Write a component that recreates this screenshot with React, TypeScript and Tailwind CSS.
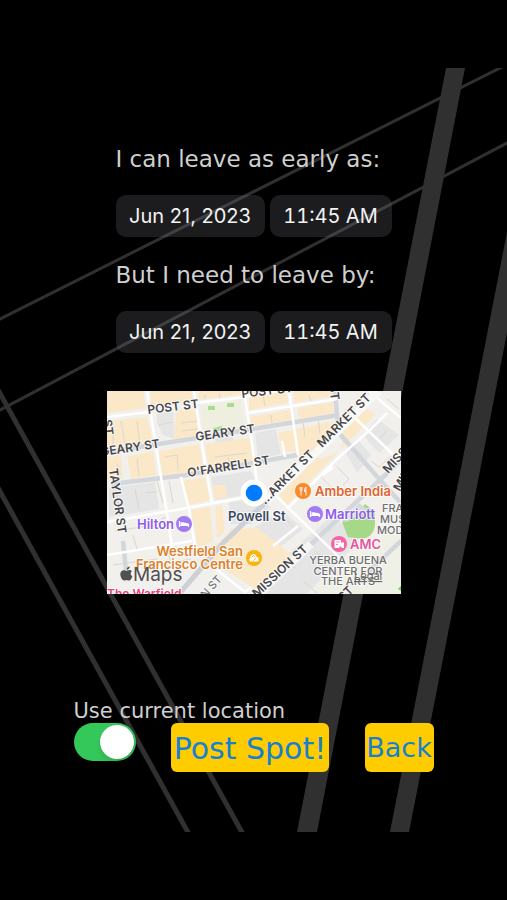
import React, { useState } from 'react';

const streets = [
  { text: 'POST ST', x: 41, y: 23, angle: -7 },
  { text: 'POST ST', x: 135, y: 7, angle: -7 },
  { text: 'GEARY ST', x: -6, y: 65, angle: -8 },
  { text: 'GEARY ST', x: 89, y: 50, angle: -8 },
  { text: "O'FARRELL ST", x: 81, y: 86, angle: -9 },
  { text: 'MARKET ST', x: 215, y: 57, angle: -45 },
  { text: '...ARKET ST', x: 158, y: 114, angle: -45 },
  { text: 'MISSION ST', x: 150, y: 207, angle: -43 },
  { text: 'MISSION ST', x: 281, y: 83, angle: -47 },
  { text: 'MINNA ST', x: 293, y: 101, angle: -60 },
  { text: 'TAYLOR ST', x: 2, y: 78, angle: 82 },
  { text: 'ST', x: -4, y: 29, angle: 82 },
  { text: 'ST', x: 222, y: -6, angle: 82 },
  { text: 'ST', x: 236, y: 211, angle: -45 },
];

const whiteRoads = [
  'M0 26 42 21M88 12 138 6 190-3',
  'M40 0 51 68 58 110 65 156',
  'M87 0 96 60 105 112',
  'M137 0 144 45 150 92',
  'M182 0 191 64',
  'M141 22 230 8',
  'M175 50 178 66',
  'M0 131 80 117 140 106',
  'M74 86 82 118 88 156',
  'M0 164 85 150',
  'M166 102 226 160 240 176',
  'M180 118 230 68 263 39 280 22',
  'M262 0 294 27',
  'M246 25 294 71',
  'M216 84 226 76M166 155 191 135M150 200 178 180',
  'M106 176 138 201 144 196',
];

const grayRoads = [
  'M0 61 90 47 232 24',
  'M4 93 80 84 190 64',
  'M228 0 230 24 232 42 273 89 294 112',
  'M16 150 20 190',
  'M186 170 273 89 294 69',
  'M262 180 294 150',
];

const beige = [
  'M0 0H36L39 17 0 22Z',
  'M44 0H84L86 10 43 16Z',
  'M92 0H134L136 3 91 9Z',
  'M142 0H179L181 12 142 19Z',
  'M187 0H226L226 5 187 12Z',
  'M0 30 40 26 46 52 0 57Z',
  'M69 20 88 18 92 44 67 48Z',
  'M142 26 183 19 186 29 145 35Z',
  'M190 17 226 11 227 22 192 28Z',
  'M0 66 14 64 16 88 0 88Z',
  'M20 66 46 60 49 84 24 88Z',
  'M52 60 92 53 97 80 55 84Z',
  'M98 53 142 47 147 74 102 80Z',
  'M171 42 227 30 228 38 206 62 193 64 187 60 175 61Z',
  'M236 38 258 16 268 24 234 58Z',
  'M76 90 98 86 103 109 81 114Z',
  'M106 94 118 94 120 106 107 108Z',
  'M84 119 103 116 106 150 91 156Z',
  'M108 115 115 114 118 140 110 148Z',
  'M170 101 208 64 214 68 232 60 180 114Z',
  'M92 158 112 152 124 138 151 137 187 166 148 198 120 180Z',
];

const grayBlocks = [
  'M50 22 66 20 68 48 56 44 50 32Z',
  'M10 6 30 2 32 13 12 12Z',
  'M108 48 126 46 128 58 110 60Z',
  'M148 42 169 38 174 63 151 68Z',
  'M104 86 144 80 149 90 132 105 108 109Z',
  'M2 97 48 91 52 118 2 126Z',
  'M122 111 150 108 164 116 144 133 124 133Z',
  'M178 166 226 124 252 150 200 203 160 203Z',
  'M176 120 196 138 168 160 148 136Z',
  'M238 60 250 48 264 64 250 82Z',
  'M270 28 292 44 272 62 256 44Z',
];

const outlines = [
  'M6 34V54M14 30 18 53M30 30 33 54M52 34 66 31M74 32 90 30M75 40 90 38',
  'M10 72 13 84M30 68 32 85M58 66 70 64 71 78M108 66 140 62M121 66 124 77',
  'M10 103 12 120M28 98 32 118M39 102 50 101M8 140 48 134M26 144 30 158M54 128 60 126',
  'M50 90 56 112M62 90 66 112M6 174 50 168M60 158 64 172 84 168',
  'M98 4V8M112 2 113 8M156 4 158 15M164 24 165 32M202 4 204 10M196 30 198 46M211 27 213 43',
  'M212 84 224 96M230 76 242 88 236 94M246 60 258 72M264 70 272 76 284 65M270 50 280 40M280 8 292 18',
  'M150 120 160 130M174 124 186 135M176 168 190 178M208 160 220 172M196 190 210 202M220 180 226 190',
];

const pois = [
  { name: 'Amber India', x: 208, y: 105, color: '#e4642b' },
  { name: 'Marriott', x: 218, y: 128, color: '#8f5bea' },
  { name: 'AMC', x: 243, y: 158, color: '#e8559a' },
  { name: 'Hilton', x: 30, y: 138, color: '#8f5bea' },
];

const Bed = ({ x, y }: { x: number; y: number }) => (
  <g transform={`translate(${x} ${y})`}>
    <circle r="8" fill="#a27bf2" />
    <path d="M-4.500-3V3M-4.500 1.500H4.500M4.500 3V0" stroke="#fff" strokeWidth="1.2" fill="none" />
    <path d="M-3.500-1.800h2.400L4.500-.6V1.500h-8z" fill="#fff" />
  </g>
);

const LocationMap = () => (
  <svg viewBox="0 0 294 203" role="img" aria-label="Map of Powell St" className="block w-full overflow-hidden bg-[#f1f0ed]">
    {grayBlocks.map((d) => <path key={d} d={d} fill="#e5e5e6" />)}
    {beige.map((d) => <path key={d} d={d} fill="#fbe8c9" />)}
    <path d="M93 15 134 9 139 41 97 47Z" fill="#efefe0" />
    <path d="M101 15h7v4h-7zM120 12h7v4h-7zM106 37l9-2v4l-9 2z" fill="#a9dc8c" />
    <path d="M205 203 294 125V203Z" fill="#eff0e6" />
    {outlines.map((d) => <path key={d} d={d} fill="none" stroke="#ddd7cb" strokeWidth="1" />)}
    {grayRoads.map((d) => <path key={d} d={d} fill="none" stroke="#d3d6da" strokeWidth="4.5" />)}
    {whiteRoads.map((d) => <path key={d} d={d} fill="none" stroke="#fff" strokeWidth="2.5" />)}
    <path d="M72 203 116 152 160 110" fill="none" stroke="#cdd1d5" strokeWidth="5" />
    <path d="M160 110 272 0" fill="none" stroke="#f8f8f7" strokeWidth="8" />
    <path d="M142 212 204 153" fill="none" stroke="#f5f5f4" strokeWidth="8" />
    <path d="M235 131 250 122 258 113 268 121V132C268 140 264 146 256 148L241 146Z" fill="#a5d987" />
    <path d="M235 130 252 112 260 118 240 131Z" fill="#d7dadb" />
    <path d="M291 198 294 195V200Z" fill="#70d050" />

    <g fill="#48484a" stroke="#fff" strokeWidth="2" strokeOpacity=".65" paintOrder="stroke" className="font-['Inter',sans-serif] text-[12px] font-semibold">
      {streets.map((s, i) => (
        <text key={i} transform={`translate(${s.x} ${s.y}) rotate(${s.angle})`}>{s.text}</text>
      ))}
      <text transform="translate(83 225) rotate(-48)" fill="#77777a" className="text-[11px] font-medium">ASON ST</text>
    </g>

    <g fill="#6f6f70" stroke="#fff" strokeWidth="2" strokeOpacity=".6" paintOrder="stroke" className="font-['Inter',sans-serif] text-[11px] font-medium">
      <text x="275" y="121">FRANCISCO</text>
      <text x="273" y="132">MUSEUM</text>
      <text x="270" y="143">MODERN</text>
      <g textAnchor="middle">
        <text x="241" y="173">YERBA BUENA</text>
        <text x="241" y="184">CENTER FOR</text>
        <text x="241" y="194">THE ARTS</text>
      </g>
    </g>

    <g stroke="#fff" strokeWidth="2" strokeOpacity=".75" paintOrder="stroke" className="font-['Inter',sans-serif] text-[13px] font-semibold">
      {pois.map((p) => (
        <text key={p.name} x={p.x} y={p.y} fill={p.color}>{p.name}</text>
      ))}
      <text x="121" y="130" fill="#3d4962">Powell St</text>
      <g fill="#dc822b" textAnchor="end">
        <text x="136" y="165">Westfield San</text>
        <text x="136" y="178">Francisco Centre</text>
      </g>
      <text x="0" y="207" fill="#ea3f78" className="text-[12px]">The Warfield</text>
    </g>

    <Bed x={77} y={133} />
    <Bed x={208} y={123} />
    <circle cx="196" cy="100" r="8" fill="#f68a2c" />
    <path d="M193 96v2.500q0 1 1 1v5M195 96v2.500q0 1-1 1M194 96v4M199 104.500V96q-1.500 1-1.500 4.500H199" stroke="#fff" strokeWidth=".9" fill="none" />
    <circle cx="232" cy="153" r="8" fill="#f763a4" />
    <path d="M227.500 149h6.500v2.500h3v5.500h-2l-1-1.500h-1.500v1.500h-5z" fill="#fff" />
    <path d="M229 151h3.500M229 153.500h2" stroke="#f763a4" strokeWidth=".8" />
    <circle cx="147" cy="167" r="8" fill="#f8b50f" />
    <path d="M142.500 170.500v-3.500h1v-2q3-4 6 0v1.500h2v4z" fill="#fff" />
    <path d="M145 166q1.500-3 3 0M146 170l3-3" stroke="#f8b50f" strokeWidth=".9" fill="none" />

    <g fill="#505052">
      <path d="M22.700 175.500c.2 1.700-1.400 3.300-3 3.300-.2-1.600 1.400-3.200 3-3.300zM24.800 180.400c-1.700 1.200-1.500 3.800.6 4.800-.7 2-2 4.300-3.400 4.300-1 0-1.300-.6-2.500-.6s-1.500.6-2.500.6c-1.800 0-3.700-3.600-3.700-6.200 0-2.700 1.700-4.100 3.500-4.100 1.100 0 2 .7 2.700.7.700 0 1.700-.8 3-.8 1 0 1.800.5 2.300 1.300z" />
      <text x="26" y="190" className="font-['Inter',sans-serif] text-[19px]">Maps</text>
    </g>
    <text x="247" y="189" fill="#68686a" className="font-['Inter',sans-serif] text-[11px] underline">Legal</text>

    <circle cx="147" cy="102" r="13.500" fill="#fff" />
    <circle cx="147" cy="102" r="8.300" fill="#007aff" />
  </svg>
);

const Backdrop = () => (
  <svg viewBox="0 0 507 764" preserveAspectRatio="xMidYMid slice" aria-hidden="true" className="col-start-1 row-start-1 my-[68px] h-[764px] w-full">
    <g stroke="#303030" fill="none">
      <path d="M-2 252 506-3M-2 343 509 74" strokeWidth="3" />
      <path d="M-3 320 244 768M-3 418 190 768" strokeWidth="5" />
    </g>
    <path d="M446 0H465L317 764H297ZM539 0H559L409 764H390Z" fill="#303030" />
  </svg>
);

const TimeField = ({ id, label }: { id: string; label: string }) => (
  <div role="group" aria-labelledby={id}>
    <h2 id={id} className="mb-5 text-[23px] leading-8 text-[#cfcfcf]">{label}</h2>
    <div className="flex gap-[5px] font-['Inter',sans-serif] text-[20px] text-[#f2f2f2]">
      <button type="button" className="h-[42px] w-[149px] rounded-[10px] bg-[#767680]/24">Jun 21, 2023</button>
      <button type="button" className="h-[42px] w-[122px] rounded-[10px] bg-[#767680]/24 tabular-nums">11:45 AM</button>
    </div>
  </div>
);

const App = () => {
  const [useCurrent, setUseCurrent] = useState(true);

  return (
    <div className="grid min-h-screen grid-cols-1 bg-black font-['DejaVu_Sans',Verdana,sans-serif]">
      <Backdrop />
      <main className="z-10 col-start-1 row-start-1 flex flex-col items-center pt-[143px]">
        <div className="flex flex-col gap-[22px]">
          <TimeField id="early" label="I can leave as early as:" />
          <TimeField id="late" label="But I need to leave by:" />
        </div>

        <div className="mt-[38px] w-full max-w-[294px]">
          <LocationMap />
        </div>

        <div className="mt-[105px] flex w-full max-w-[360px] flex-col">
          <label htmlFor="current" className="text-[21px] leading-6 text-[#cfcfcf]">Use current location</label>
          <div className="flex items-start justify-between">
            <input
              id="current"
              type="checkbox"
              role="switch"
              checked={useCurrent}
              onChange={(e) => setUseCurrent(e.target.checked)}
              className="flex h-[38px] w-[62px] appearance-none items-center rounded-full bg-[#39393d] p-0.5 before:size-[34px] before:rounded-full before:bg-white before:shadow-md checked:justify-end checked:bg-[#34c759]"
            />
            <button type="button" className="h-[49px] w-[158px] rounded-md bg-[#ffcc00] pt-0.5 text-[30px] whitespace-nowrap text-[#1680d2]">Post Spot!</button>
            <button type="button" className="h-[49px] w-[69px] rounded-md bg-[#ffcc00] pt-0.5 text-[27px] text-[#1680d2]">Back</button>
          </div>
        </div>
      </main>
    </div>
  );
};

export default App;
